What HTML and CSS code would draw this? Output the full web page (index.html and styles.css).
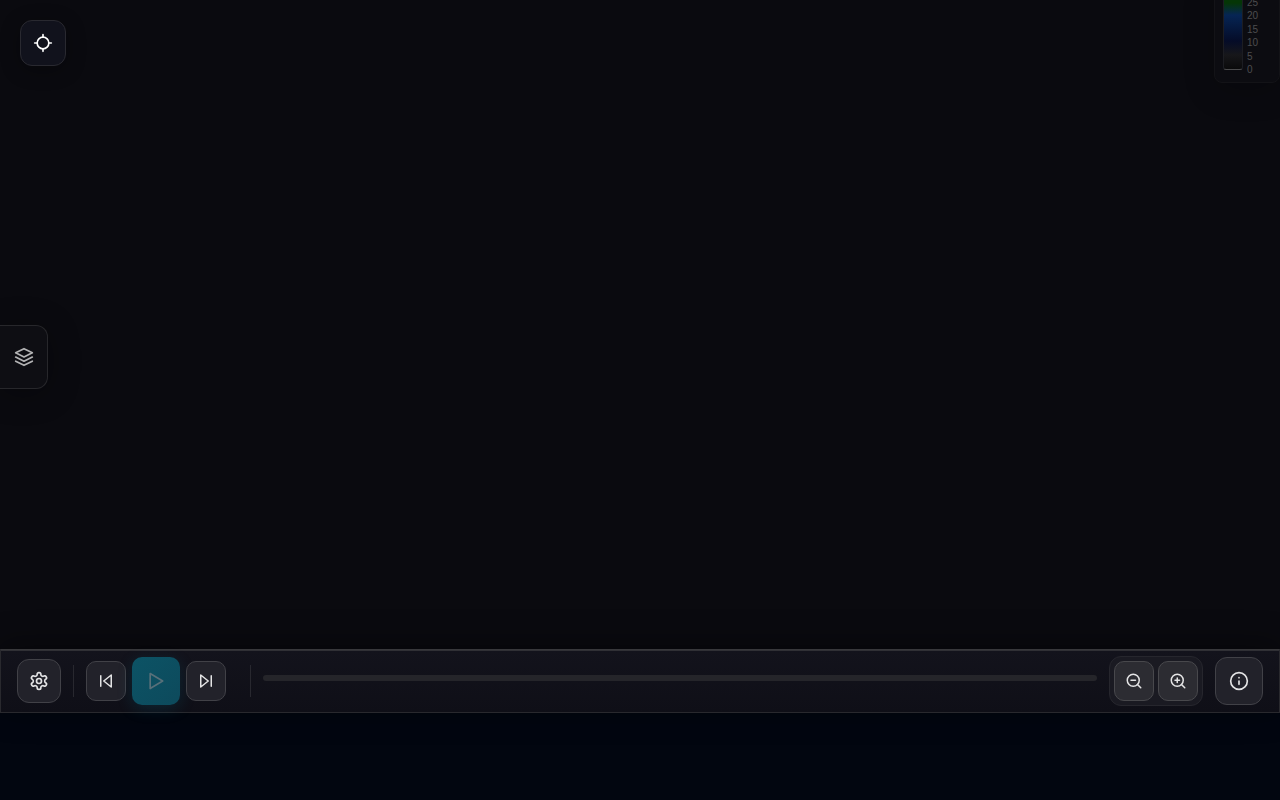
FILE: index.html
```html
<!DOCTYPE html>
<html lang="en">
<head>
    <meta charset="UTF-8">
    <meta name="viewport" content="width=device-width, initial-scale=1.0">
    <title>Radar</title>
    <link rel="stylesheet" href="styles.css">
</head>
<body>
    <main class="map">
        <button class="locate-btn" aria-label="My location">
            <svg class="icon-md" viewBox="0 0 24 24"><path d="M2 12h3M19 12h3M12 2v3M12 19v3"/><circle cx="12" cy="12" r="7"/></svg>
        </button>

        <button class="layers-btn" aria-label="Layers">
            <svg class="icon-md" viewBox="0 0 24 24"><path d="M12 2 2 7l10 5 10-5-10-5z"/><path d="m2 17 10 5 10-5"/><path d="m2 12 10 5 10-5"/></svg>
        </button>

        <div class="legend">
            <div class="legend-bar"></div>
            <div class="legend-labels">
                <span>25</span>
                <span>20</span>
                <span>15</span>
                <span>10</span>
                <span>5</span>
                <span>0</span>
            </div>
        </div>
    </main>

    <div class="toolbar">
        <button class="btn btn-settings" aria-label="Settings">
            <svg class="icon-md" viewBox="0 0 24 24"><path d="M12.22 2h-.44a2 2 0 0 0-2 2v.18a2 2 0 0 1-1 1.73l-.43.25a2 2 0 0 1-2 0l-.15-.08a2 2 0 0 0-2.73.73l-.22.38a2 2 0 0 0 .73 2.73l.15.1a2 2 0 0 1 1 1.72v.51a2 2 0 0 1-1 1.74l-.15.09a2 2 0 0 0-.73 2.73l.22.38a2 2 0 0 0 2.73.73l.15-.08a2 2 0 0 1 2 0l.43.25a2 2 0 0 1 1 1.73V20a2 2 0 0 0 2 2h.44a2 2 0 0 0 2-2v-.18a2 2 0 0 1 1-1.73l.43-.25a2 2 0 0 1 2 0l.15.08a2 2 0 0 0 2.73-.73l.22-.39a2 2 0 0 0-.73-2.73l-.15-.08a2 2 0 0 1-1-1.74v-.5a2 2 0 0 1 1-1.74l.15-.09a2 2 0 0 0 .73-2.73l-.22-.38a2 2 0 0 0-2.73-.73l-.15.08a2 2 0 0 1-2 0l-.43-.25a2 2 0 0 1-1-1.73V4a2 2 0 0 0-2-2z"/><circle cx="12" cy="12" r="3"/></svg>
        </button>
        <div class="divider"></div>
        <div class="playback">
            <button class="btn" aria-label="Previous frame">
                <svg class="icon-sm" viewBox="0 0 24 24"><path d="M19 20 9 12l10-8v16z"/><path d="M5 19V5"/></svg>
            </button>
            <button class="btn btn-play" aria-label="Play" disabled>
                <svg class="icon-md" viewBox="0 0 24 24"><path d="m5 3 15 9-15 9V3z"/></svg>
            </button>
            <button class="btn" aria-label="Next frame">
                <svg class="icon-sm" viewBox="0 0 24 24"><path d="m5 4 10 8-10 8V4z"/><path d="M19 5v14"/></svg>
            </button>
        </div>
        <div class="divider"></div>
        <div class="timeline"></div>
        <div class="zoom-group">
            <button class="btn" aria-label="Zoom out">
                <svg class="icon-sm" viewBox="0 0 24 24"><circle cx="11" cy="11" r="8"/><path d="m21 21-4.35-4.35M8 11h6"/></svg>
            </button>
            <button class="btn" aria-label="Zoom in">
                <svg class="icon-sm" viewBox="0 0 24 24"><circle cx="11" cy="11" r="8"/><path d="m21 21-4.35-4.35M11 8v6M8 11h6"/></svg>
            </button>
        </div>
        <button class="btn btn-info" aria-label="Info">
            <svg class="icon-md" viewBox="0 0 24 24"><circle cx="12" cy="12" r="10"/><path d="M12 16v-4M12 8h.01"/></svg>
        </button>
    </div>
</body>
</html>
```
FILE: styles.css
```css
* {
    box-sizing: border-box;
}
body {
    display: flex;
    flex-direction: column;
    height: 100vh;
    margin: 0;
    padding-bottom: 87px;
    overflow: hidden;
    background-color: #020610;
    font-family: "Liberation Sans", Arial, sans-serif;
}
button {
    display: flex;
    align-items: center;
    justify-content: center;
    padding: 0;
    cursor: pointer;
}
svg {
    fill: none;
    stroke: currentColor;
    stroke-width: 2;
    stroke-linecap: round;
    stroke-linejoin: round;
}
.icon-sm {
    width: 18px;
    height: 18px;
}
.icon-md {
    width: 20px;
    height: 20px;
}

/* Map area */
.map {
    position: relative;
    flex: 1;
    overflow: hidden;
    background-color: #0a0a0f;
}
.locate-btn {
    position: absolute;
    top: 20px;
    left: 20px;
    width: 46px;
    height: 46px;
    border: 1px solid #292930;
    border-radius: 12px;
    background-color: #11121c;
    color: #fff;
    box-shadow: 0 4px 20px rgba(0, 0, 0, 0.3);
}
.layers-btn {
    position: absolute;
    top: 325px;
    left: 0;
    width: 48px;
    height: 64px;
    border: 1px solid #27272b;
    border-left: none;
    border-radius: 0 12px 12px 0;
    background-color: #0e0e13;
    color: #b4b4b5;
    box-shadow: 0 4px 32px rgba(0, 0, 0, 0.3);
}

/* Color scale */
.legend {
    position: absolute;
    top: -24px;
    right: 0;
    display: flex;
    gap: 4px;
    width: 66px;
    padding: 12px 8px;
    border: 1px solid #131317;
    border-radius: 8px;
    background-color: #0c0c11;
    box-shadow: 0 8px 32px rgba(0, 0, 0, 0.2);
}
.legend-bar {
    width: 20px;
    height: 81px;
    border: 1px solid #1c1d22;
    border-bottom-color: #4a4a4c;
    border-radius: 3px;
    background: linear-gradient(to top, #0a0a0b 0, #17171a 14px, #050c28 28px, #062554 54px, #053606 66px, #053606 100%);
}
.legend-labels {
    display: flex;
    flex-direction: column;
    justify-content: space-between;
    margin: 8px 0 -6px;
    color: #4c4c4f;
    font-size: 10px;
    line-height: 12px;
}

/* Bottom toolbar */
.toolbar {
    display: flex;
    align-items: center;
    gap: 12px;
    height: 64px;
    padding: 0 16px;
    border: 1px solid #29292e;
    border-top-color: #38383b;
    background: linear-gradient(#13131c, #0f0f17);
    box-shadow: inset 0 1px #303035, 0 -4px 32px rgba(0, 0, 0, 0.4);
    z-index: 1;
}
.btn {
    width: 40px;
    height: 40px;
    border: 1px solid #414147;
    border-radius: 10px;
    background-color: #22222a;
    color: #e4e4e5;
}
.btn-settings {
    width: 44px;
    height: 44px;
    border-radius: 12px;
}
.btn-info {
    width: 48px;
    height: 48px;
    border-radius: 12px;
}
.btn-play {
    width: 48px;
    height: 48px;
    border: none;
    background: linear-gradient(135deg, #0c5365, #0d4a5c);
    color: #587079;
    box-shadow: 0 4px 16px rgba(6, 120, 150, 0.2);
    cursor: not-allowed;
}
.divider {
    width: 1px;
    height: 32px;
    background-color: #28282f;
}
.playback {
    display: flex;
    align-items: center;
    gap: 6px;
    margin-right: 12px;
}
.timeline {
    flex: 1;
    height: 6px;
    margin-bottom: 6px;
    border-radius: 3px;
    background-color: #25252a;
}
.zoom-group {
    display: flex;
    gap: 4px;
    padding: 4px;
    border: 1px solid #26262d;
    border-radius: 12px;
    background-color: #1a1a22;
}
.zoom-group .btn {
    border-color: #48484c;
    background-color: #2c2c32;
}
```
